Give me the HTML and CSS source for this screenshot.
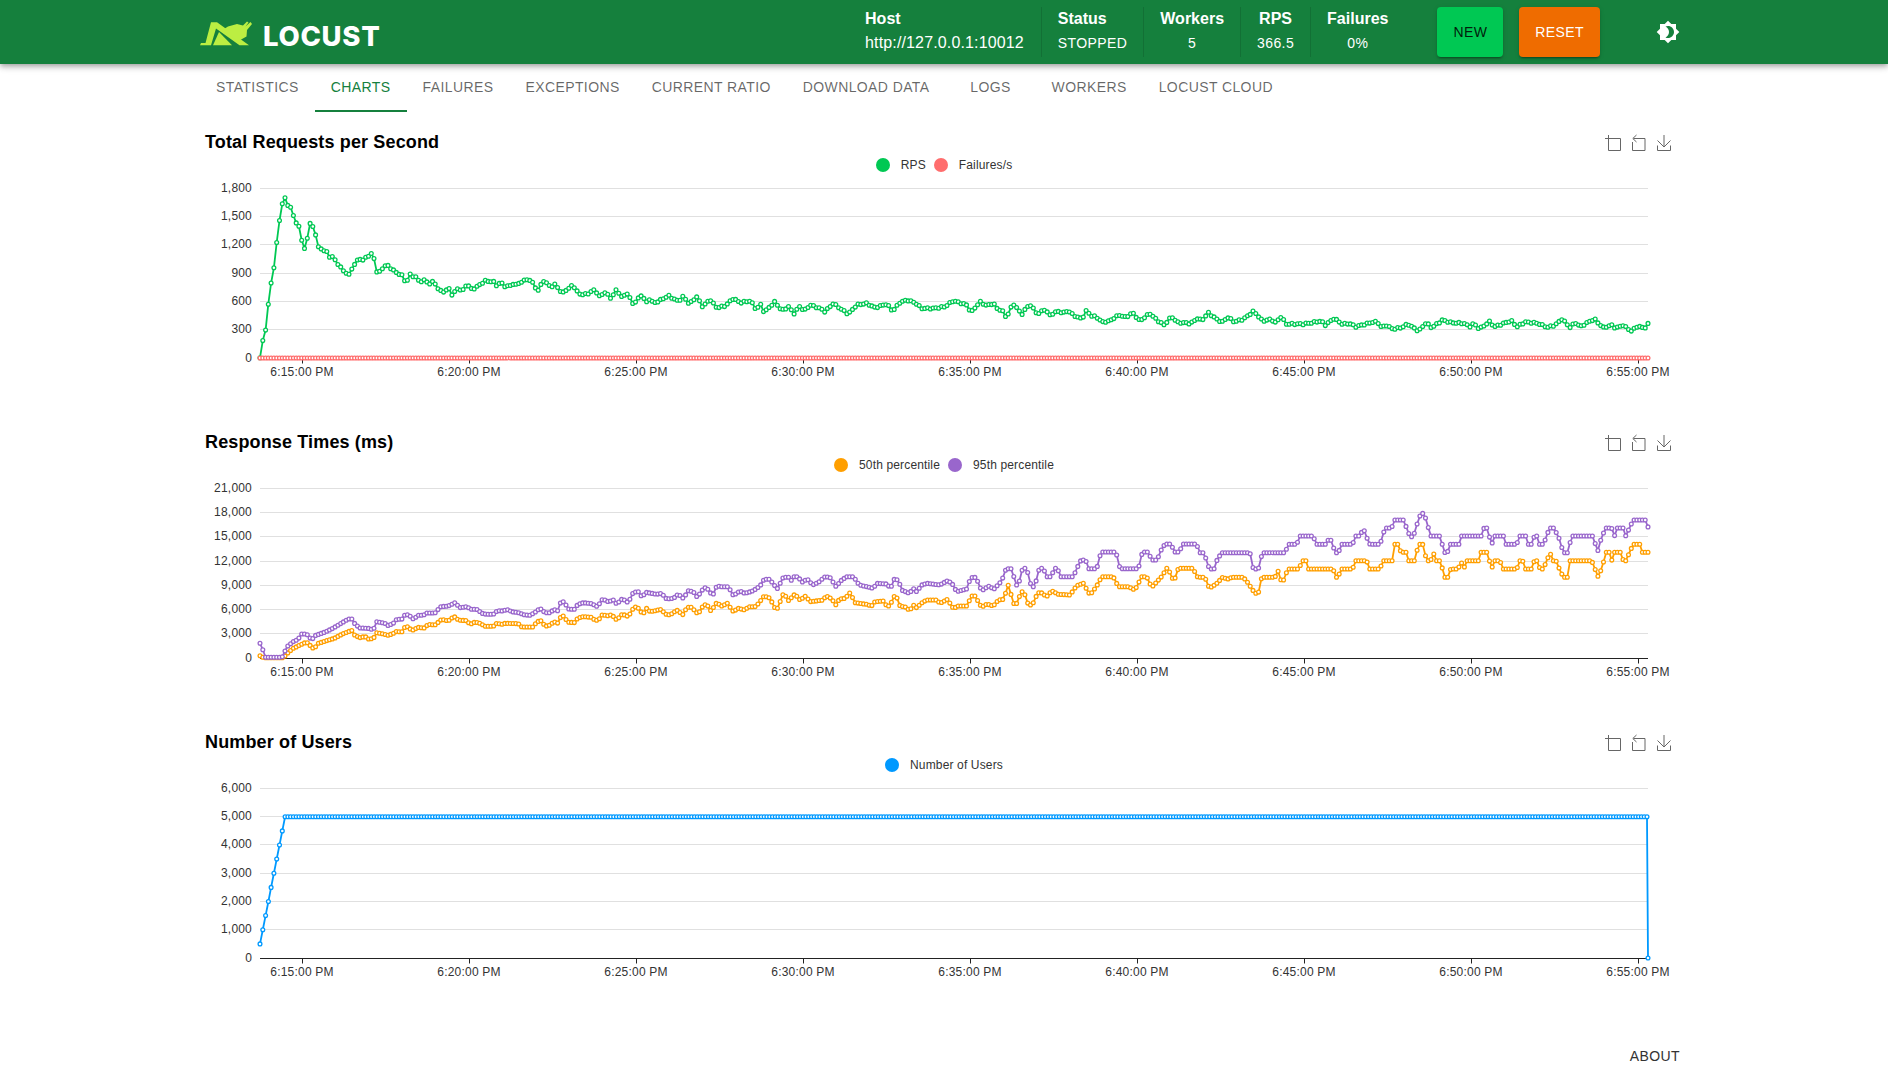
FILE: index.html
```html
<!DOCTYPE html>
<html lang="en">
<head>
<meta charset="utf-8">
<title>Locust</title>
<link rel="stylesheet" href="styles.css">
</head>
<body>
<header class="appbar">
  <div class="appbar-inner">
    <a class="logo" href="#">
      <svg class="logo-mark" viewBox="0 0 70 40" aria-hidden="true">
        <path d="M5 32.300l1-2.300h4.500L16 9.300h6L54 32.300H44.500L21 15.500 16 32.300z"/>
        <path d="M18 32.300L24 19l13 13.300z"/>
        <path d="M26.500 17.500L33 13.500l9-2.500 6 1.500 4-4 1.500 1-3 4 5-4.500L57 11l-5 6-.5 6.500L43.500 28z"/>
      </svg>
      <span class="logo-word">LOCUST</span>
    </a>
    <div class="stats">
      <div class="stat stat-host"><span class="stat-label">Host</span><span class="stat-host-value">http://127.0.0.1:10012</span></div>
      <div class="stat stat-status"><span class="stat-label">Status</span><span class="stat-value">STOPPED</span></div>
      <div class="stat"><span class="stat-label">Workers</span><span class="stat-value">5</span></div>
      <div class="stat"><span class="stat-label">RPS</span><span class="stat-value">366.5</span></div>
      <div class="stat stat-last"><span class="stat-label">Failures</span><span class="stat-value">0%</span></div>
    </div>
    <div class="actions">
      <button class="btn btn-new" type="button">New</button>
      <button class="btn btn-reset" type="button">Reset</button>
    </div>
    <button class="theme-toggle" type="button" aria-label="Toggle theme">
      <svg viewBox="0 0 24 24" aria-hidden="true"><path d="M20 8.69V4h-4.69L12 .69 8.69 4H4v4.69L.69 12 4 15.31V20h4.69L12 23.31 15.31 20H20v-4.69L23.31 12zM12 18c-.89 0-1.74-.2-2.5-.55C11.56 16.5 13 14.42 13 12s-1.44-4.5-3.5-5.45C10.26 6.2 11.11 6 12 6c3.31 0 6 2.69 6 6s-2.69 6-6 6" fill-rule="evenodd"/></svg>
    </button>
  </div>
</header>

<main class="page">
  <nav class="tabs">
    <a class="tab" href="#">Statistics</a>
    <a class="tab tab-active" href="#">Charts</a>
    <a class="tab" href="#">Failures</a>
    <a class="tab" href="#">Exceptions</a>
    <a class="tab" href="#">Current ratio</a>
    <a class="tab" href="#">Download Data</a>
    <a class="tab" href="#">Logs</a>
    <a class="tab" href="#">Workers</a>
    <a class="tab" href="#">Locust Cloud</a>
  </nav>

  <section class="chart">
    <div class="chart-head">
      <h2 class="chart-title">Total Requests per Second</h2>
      <div class="toolbox">
        <svg class="tool tool-zoom" viewBox="0 0 16 16"><path d="M3.500 0v15.500h12V3.500H0"/></svg>
        <svg class="tool" viewBox="0 0 14 16"><path d="M1.500 3.500h11.500v12H.5V7M4.500 0L.8 3.500l3.700 3.500"/></svg>
        <svg class="tool" viewBox="0 0 14 16"><path d="M7 0v12M.5 5.500L7 12l6.500-6.500M.5 10.500v5h13v-5"/></svg>
      </div>
    </div>
    <div class="legend">
      <span class="legend-item"><i class="dot dot-rps"></i>RPS</span>
      <span class="legend-item"><i class="dot dot-fail"></i>Failures/s</span>
    </div>
    <svg class="plot" id="plot-rps" viewBox="0 0 1488 252"></svg>
  </section>

  <section class="chart">
    <div class="chart-head">
      <h2 class="chart-title">Response Times (ms)</h2>
      <div class="toolbox">
        <svg class="tool tool-zoom" viewBox="0 0 16 16"><path d="M3.500 0v15.500h12V3.500H0"/></svg>
        <svg class="tool" viewBox="0 0 14 16"><path d="M1.500 3.500h11.500v12H.5V7M4.500 0L.8 3.500l3.700 3.500"/></svg>
        <svg class="tool" viewBox="0 0 14 16"><path d="M7 0v12M.5 5.500L7 12l6.500-6.500M.5 10.500v5h13v-5"/></svg>
      </div>
    </div>
    <div class="legend">
      <span class="legend-item"><i class="dot dot-p50"></i>50th percentile</span>
      <span class="legend-item"><i class="dot dot-p95"></i>95th percentile</span>
    </div>
    <svg class="plot" id="plot-times" viewBox="0 0 1488 252"></svg>
  </section>

  <section class="chart">
    <div class="chart-head">
      <h2 class="chart-title">Number of Users</h2>
      <div class="toolbox">
        <svg class="tool tool-zoom" viewBox="0 0 16 16"><path d="M3.500 0v15.500h12V3.500H0"/></svg>
        <svg class="tool" viewBox="0 0 14 16"><path d="M1.500 3.500h11.500v12H.5V7M4.500 0L.8 3.500l3.700 3.500"/></svg>
        <svg class="tool" viewBox="0 0 14 16"><path d="M7 0v12M.5 5.500L7 12l6.500-6.500M.5 10.500v5h13v-5"/></svg>
      </div>
    </div>
    <div class="legend">
      <span class="legend-item"><i class="dot dot-users"></i>Number of Users</span>
    </div>
    <svg class="plot" id="plot-users" viewBox="0 0 1488 252"></svg>
  </section>

  <footer class="footer">
    <button class="about" type="button">About</button>
  </footer>
</main>
<script src="charts.js"></script>
</body>
</html>
```

FILE: styles.css
```css
* { box-sizing: border-box; }
html, body { margin: 0; padding: 0; background: #fff; }
body {
  font-family: "Liberation Sans", Arial, sans-serif;
  color: #000;
  overflow: hidden;
}
a { text-decoration: none; color: inherit; }
button { font-family: inherit; border: 0; cursor: pointer; }

.appbar {
  height: 64px;
  background: #15803d;
  color: #fff;
  box-shadow: 0 2px 4px -1px rgba(0,0,0,.2), 0 4px 5px 0 rgba(0,0,0,.14), 0 1px 10px 0 rgba(0,0,0,.12);
  position: relative;
}
.appbar-inner {
  width: 1488px;
  height: 64px;
  margin: 0 auto;
  display: flex;
  align-items: center;
}
.logo { display: flex; align-items: center; color: #fff; margin-left: -5px; }
.logo-mark { width: 70px; height: 40px; fill: #bcee42; margin-top: 1px; }
.logo-word {
  font-family: Inter, "Liberation Sans", sans-serif;
  font-weight: 800;
  font-size: 27.5px;
  line-height: 26px;
  letter-spacing: .7px;
  margin-left: -2px;
  margin-top: 7px;
}

.stats { display: flex; margin-left: auto; height: 50px; }
.stat {
  display: flex;
  flex-direction: column;
  align-items: center;
  padding: 1px 16px 0;
  border-right: 1px solid rgba(0,0,0,.12);
}
.stat-host { align-items: flex-start; padding-right: 17px; }
.stat-status { align-items: flex-start; }
.stat-last { border-right: 0; }
.stat-label { font-size: 16px; font-weight: 700; line-height: 22px; }
.stat-value { font-size: 14px; line-height: 22px; margin-top: 2px; letter-spacing: .4px; }
.stat-host-value { font-size: 16px; line-height: 22px; margin-top: 2px; letter-spacing: .14px; }

.actions { display: flex; gap: 16px; margin-left: 33px; }
.btn {
  height: 50px;
  padding: 0 16px;
  border-radius: 4px;
  font-size: 14px;
  letter-spacing: .4px;
  text-transform: uppercase;
  box-shadow: 0 3px 1px -2px rgba(0,0,0,.2), 0 2px 2px 0 rgba(0,0,0,.14), 0 1px 5px 0 rgba(0,0,0,.12);
}
.btn-new { background: #00c853; color: rgba(0,0,0,.87); }
.btn-reset { background: #ef6c00; color: #fff; }
.theme-toggle {
  width: 40px;
  height: 40px;
  margin-left: 48px;
  padding: 8px;
  background: none;
  display: flex;
}
.theme-toggle svg { width: 24px; height: 24px; fill: #fff; }

.page { width: 1488px; margin: 0 auto; }

.tabs { display: flex; height: 48px; }
.tab {
  min-width: 90px;
  height: 48px;
  padding: 0 16px 2px;
  display: flex;
  align-items: center;
  justify-content: center;
  font-size: 14px;
  letter-spacing: .4px;
  text-transform: uppercase;
  color: rgba(0,0,0,.6);
}
.tab-active { color: #15803d; border-bottom: 2px solid #15803d; padding-bottom: 0; }

.chart { height: 300px; }
.tabs + .chart { margin-top: 14px; }
.chart-head {
  height: 30px;
  display: flex;
  align-items: center;
  justify-content: space-between;
  padding: 1px 17px 0 5px;
}
.chart-title { margin: 0; font-size: 18px; font-weight: 700; line-height: 30px; letter-spacing: .14px; }
.toolbox { display: flex; gap: 11px; margin-top: 3px; }
.tool { width: 14px; height: 16px; fill: none; stroke: #666; stroke-width: 1; overflow: visible; }
.tool-zoom { width: 16px; }

.legend {
  height: 18px;
  display: flex;
  justify-content: center;
  align-items: center;
  gap: 8px;
  font-size: 12px;
  letter-spacing: .15px;
  color: #333;
}
.legend-item { display: flex; align-items: center; gap: 11px; }
.dot { width: 14px; height: 14px; border-radius: 50%; display: block; }
.dot-rps { background: #00c853; }
.dot-fail { background: #ff6d6d; }
.dot-p50 { background: #ff9f00; }
.dot-p95 { background: #9966cc; }
.dot-users { background: #0099ff; }

.plot { display: block; width: 1488px; height: 252px; }
.grid-line { stroke: #e0e0e0; stroke-width: 1; }
.axis-line { stroke: #222; stroke-width: 1; }
.axis-label { font-family: "Liberation Sans", Arial, sans-serif; font-size: 12px; letter-spacing: .2px; fill: #333; }
.label-y { text-anchor: end; }
.label-x { text-anchor: middle; }
.series-line { fill: none; stroke-width: 1.8; stroke-linejoin: round; }
.marker { fill: #fff; stroke-width: 1.3; }
.s-rps { stroke: #00c853; }
.s-fail { stroke: #ff6d6d; }
.s-p50 { stroke: #ff9f00; }
.s-p95 { stroke: #9966cc; }
.s-users { stroke: #0099ff; }

.footer { display: flex; justify-content: flex-end; margin-top: 12px; }
.about {
  height: 36px;
  padding: 0 8px;
  background: none;
  font-size: 14px;
  letter-spacing: .4px;
  text-transform: uppercase;
  color: #333;
}
```

FILE: charts.js
```js
(function () {
  var NS = 'http://www.w3.org/2000/svg';
  var X0 = 260, X1 = 1648, N = 500, DX = (X1 - X0) / (N - 1);
  var TIMES = ['6:15:00 PM', '6:20:00 PM', '6:25:00 PM', '6:30:00 PM', '6:35:00 PM', '6:40:00 PM', '6:45:00 PM', '6:50:00 PM', '6:55:00 PM'];

  function el(name, attrs, parent) {
    var n = document.createElementNS(NS, name);
    for (var k in attrs) n.setAttribute(k, attrs[k]);
    if (parent) parent.appendChild(n);
    return n;
  }

  // Each trace: [x origin, y origin, x scale, [x, y, x, y, ...]] read off the chart.
  function trace(segments) {
    var pts = [];
    segments.forEach(function (s) {
      for (var i = 0; i < s[3].length; i += 2) pts.push([s[0] + s[3][i] / s[2], s[1] + s[3][i + 1] / 3]);
    });
    return pts.sort(function (a, b) { return a[0] - b[0]; });
  }

  function sample(pts, x) {
    if (x <= pts[0][0]) return pts[0][1];
    for (var i = 1; i < pts.length; i++) {
      if (x <= pts[i][0]) {
        var a = pts[i - 1], b = pts[i], t = (x - a[0]) / ((b[0] - a[0]) || 1);
        return a[1] + (b[1] - a[1]) * t;
      }
    }
    return pts[pts.length - 1][1];
  }

  function frame(svg, step, count, labels) {
    for (var k = 0; k < count; k++) {
      var y = Math.floor(14.5 + k * step - 0.1) + 0.5;
      el('line', { x1: 60, x2: 1448, y1: y, y2: y, 'class': 'grid-line' }, svg);
      el('text', { x: 52, y: y + 3.5, 'class': 'axis-label label-y' }, svg).textContent = labels[k];
    }
    el('text', { x: 52, y: 188, 'class': 'axis-label label-y' }, svg).textContent = '0';
    el('line', { x1: 60, x2: 1448, y1: 184.5, y2: 184.5, 'class': 'axis-line' }, svg);
    TIMES.forEach(function (t, i) {
      var x = Math.round(102 + 167 * i) + 0.5;
      el('line', { x1: x, x2: x, y1: 184.5, y2: 189.5, 'class': 'axis-line' }, svg);
      el('text', { x: x - 0.5, y: 202, 'class': 'axis-label label-x' }, svg).textContent = t;
    });
  }

  function draw(svg, points, cls) {
    el('polyline', { points: points.map(function (p) { return p[0].toFixed(1) + ',' + p[1].toFixed(1); }).join(' '), 'class': 'series-line ' + cls }, svg);
    var g = el('g', { 'class': 'marker ' + cls }, svg);
    points.forEach(function (p) { el('circle', { cx: p[0].toFixed(1), cy: p[1].toFixed(1), r: 1.9 }, g); });
  }

  function series(pts, offset, wobble) {
    var out = [];
    for (var i = 0; i < N; i++) {
      var x = X0 + i * DX, j = (wobble && x > 330) ? wobble * Math.sin(i * 2.3) : 0;
      out.push([x - 200, sample(pts, x) + j - offset]);
    }
    return out;
  }

  var rps = trace([
    [200, 120, 3, [180,713,188,663,197,629,205,553,213,491,222,442,230,368,238,304,246,253,255,233,263,256,272,262,280,286,289,310,297,319,305,360,313,387,322,354,330,310,339,320,347,345,355,380,364,387,372,392,380,394,388,412,397,410,405,420,414,432,422,442,430,452,439,458,447,465,455,447,464,432,472,422,480,416,489,421,497,413,505,407,514,402,522,415,530,454,539,456,547,445,555,437,564,438,572,444,580,450,589,458,597,461,605,465,614,482,622,480,630,464,639,469,647,470,655,482,664,483,672,480,680,486,689,490,697,486,705,490,714,505,722,513,730,515,739,510,747,506,755,524,764,516,772,506,780,508,789,511,797,497,805,496,814,507,822,505,830,500,839,495,847,488,855,482,864,484,872,484,880,485,889,496,897,490,905,490,914,498,922,498,930,498,939,491,947,495,955,490,964,486,972,483,980,477,989,481,997,487,1005,500,1014,513,1022,495,1030,482,1039,490,1047,495,1055,500,1064,494,1072,500,1080,508,1083,525,1095,510,1110,505,1117,492,1128,510,1135,520,1150,524,1165,520,1185,508,1197,530]],
    [600, 260, 3, [0,108,15,97,33,115,50,88,66,112,82,100,100,133,124,105,140,127,150,115,160,130,182,120,205,107,235,124,250,109,268,132,290,110,308,140,330,118,350,143,375,138,400,115,420,128,452,122,468,148,483,133,492,157,525,125,545,152,565,140,582,160,600,138,612,153,630,135,660,145,675,155,700,130,720,145,745,162,770,135,800,130,825,143,860,132,878,153,900,127,922,120,945,128,965,145,1000,145,1035,140,1060,122,1100,135,1113,157,1140,125,1160,137,1180,130,1195,150]],
    [1000, 260, 2.305, [3,148,15,173,30,130,50,163,68,132,87,163,102,148,115,165,135,153,145,160,155,152,178,172,190,175,200,150,210,168,222,170,235,186,250,184,275,165,290,172,306,158,322,183,345,160,360,178,378,195,395,170,410,187,440,190,455,175,465,182,480,158,500,178,512,186,525,172,540,185,560,178,585,153,605,183,625,178,635,188,648,170,660,192,700,192,740,183,750,195,770,175,790,193,805,190,820,200,860,186,870,186,880,203,890,195,905,207,925,203,940,192,965,213,982,188,995,203,1020,180,1040,188,1070,190,1082,200,1092,190,1105,207,1128,185,1140,200,1178,182,1192,200,1210,186,1240,190,1262,202,1280,195,1295,177,1315,203,1325,187,1338,200,1355,187,1370,177,1390,203,1410,195,1420,205,1435,195,1455,213,1470,198,1485,205,1497,187]]
  ]);

  var p95 = trace([
    [200, 480, 3, [180,490,188,508,196,532,246,532,254,515,264,497,280,485,295,477,305,462,320,462,335,480,347,466,370,458,395,447,420,432,445,417,458,417,465,433,480,444,505,445,520,450,530,425,555,430,565,437,580,430,590,418,605,418,615,404,625,404,640,417,655,406,670,406,680,399,705,399,722,380,745,378,765,368,780,383,800,380,815,388,830,388,850,402,880,403,892,392,910,393,920,388,935,395,955,398,975,405,990,406,1005,397,1020,385,1035,398,1050,398,1062,388,1075,393,1082,366,1092,365,1105,387,1125,388,1133,373,1150,368,1175,371,1192,380,1208,357,1225,365,1240,360,1250,372,1267,356,1285,368,1300,337,1315,335,1325,350,1340,337,1370,343,1385,340,1400,357,1420,355,1435,342,1450,355,1465,332,1480,335,1492,352]],
    [700, 480, 3, [0,340,12,323,20,323,38,347,50,318,65,320,85,320,100,347,120,333,135,340,160,332,180,318,192,298,210,298,220,313,235,328,245,295,265,290,270,307,280,290,295,290,305,307,322,297,338,315,355,307,375,290,390,292,408,320,425,300,440,290,460,290,478,315,500,320,520,325,530,310,560,312,572,325,582,298,595,300,605,330,628,340,640,325,650,335,665,315,680,310,720,315,740,303,755,308,770,335,800,327,812,293,828,292,845,333,865,318,882,327,905,303,918,266,938,266,945,315,955,315,968,265,980,265,995,325,1005,315,1018,265,1030,265,1040,290,1055,290,1062,265,1072,265,1082,290,1120,290,1130,266,1143,240,1157,240,1165,266,1190,266,1203,216,1248,216,1260,266,1315,266,1327,216,1345,216,1355,240,1372,240,1380,216,1395,192,1415,192,1420,216,1440,216,1445,192,1490,192,1497,216]],
    [1200, 490, 3, [0,188,12,188,28,237,42,237,50,212,65,188,150,188,160,237,175,237,187,188,255,188,265,163,290,163,300,138,340,138,348,163,380,163,388,140,398,163,405,188,415,188,425,163,458,163,465,138,480,138,490,114,498,138,510,163,540,163,555,114,575,114,582,90,610,90,620,114,630,140,640,140,655,90,665,65,680,90,690,138,718,138,735,188,742,188,750,163,778,163,785,138,845,138,852,114,860,114,875,163,885,138,910,138,918,163,950,163,958,138,978,138,985,163,995,163,1003,138,1012,138,1018,163,1030,163,1040,138,1048,114,1060,114,1075,138,1090,188,1103,188,1115,138,1180,138,1192,188,1205,140,1218,114,1235,114,1243,140,1250,114,1270,114,1278,140,1288,114,1300,90,1338,90,1345,114]]
  ]);

  var p50 = trace([
    [200, 480, 3, [180,527,190,533,250,533,265,517,280,505,300,495,315,488,325,488,335,504,345,503,355,490,380,482,405,474,425,463,455,451,465,467,480,473,495,469,505,477,520,476,530,458,545,461,565,466,580,460,590,454,605,456,615,441,625,440,635,452,655,442,672,444,685,433,705,435,725,418,745,423,762,409,775,420,800,422,810,433,825,426,840,430,855,439,880,439,890,430,905,433,915,430,955,431,965,441,1000,441,1010,425,1025,422,1035,439,1050,435,1062,425,1075,430,1083,408,1095,408,1100,426,1125,428,1133,414,1150,410,1175,412,1185,421,1195,420,1208,403,1220,408,1235,404,1250,420,1267,402,1285,410,1300,385,1308,380,1320,388,1327,405,1340,385,1350,395,1385,388,1395,402,1410,405,1430,390,1450,405,1460,382,1475,382,1490,398]],
    [700, 480, 3, [0,395,10,375,20,373,33,393,50,368,65,378,82,370,100,395,115,385,135,390,145,380,165,380,178,368,190,350,205,350,215,365,225,385,238,385,243,343,255,345,265,362,285,342,300,360,317,348,330,365,370,360,378,347,395,357,408,375,418,357,435,355,450,338,465,368,500,373,515,378,525,365,550,363,560,378,572,378,578,348,590,352,600,378,620,382,628,393,640,375,652,385,660,372,680,360,710,360,720,370,742,358,760,385,775,378,800,378,815,348,825,348,845,382,860,372,880,378,895,360,910,358,925,315,935,350,945,382,960,345,970,330,985,375,997,375,1010,345,1020,335,1040,350,1055,332,1075,343,1110,345,1130,317,1150,310,1170,345,1190,318,1205,290,1240,290,1255,320,1285,320,1305,330,1325,290,1340,290,1355,322,1385,290,1400,265,1405,265,1415,295,1425,295,1435,265,1480,265,1490,290,1497,290]],
    [1200, 490, 3, [0,262,15,262,28,295,55,277,65,262,85,267,95,262,130,262,145,280,165,310,175,310,185,262,225,262,232,237,245,277,255,265,262,237,298,237,305,212,318,212,325,237,400,237,405,262,415,262,422,237,458,237,465,212,500,212,507,237,540,237,548,212,578,212,582,163,595,163,603,187,618,187,625,212,645,212,655,163,668,163,680,212,692,212,700,187,707,212,720,212,735,262,745,262,752,237,775,237,782,212,792,237,797,212,835,212,843,187,860,187,868,212,875,237,882,212,900,212,908,237,950,237,960,212,968,212,975,237,995,237,1003,212,1012,212,1020,237,1030,237,1040,212,1050,187,1058,212,1068,212,1078,237,1090,262,1103,262,1110,212,1175,212,1185,237,1192,262,1205,237,1218,187,1228,187,1235,212,1243,187,1262,187,1270,212,1280,212,1288,187,1300,163,1320,163,1327,187,1345,187]]
  ]);

  var plotRps = document.getElementById('plot-rps');
  frame(plotRps, 28.25, 6, ['1,800', '1,500', '1,200', '900', '600', '300']);
  draw(plotRps, series(rps, 174, 0.7), 's-rps');
  var flat = [];
  for (var i = 0; i < N; i++) flat.push([X0 - 200 + i * DX, 184]);
  draw(plotRps, flat, 's-fail');

  var plotTimes = document.getElementById('plot-times');
  frame(plotTimes, 169.5 / 7, 7, ['21,000', '18,000', '15,000', '12,000', '9,000', '6,000', '3,000']);
  draw(plotTimes, series(p50, 474, 0), 's-p50');
  draw(plotTimes, series(p95, 474, 0), 's-p95');

  var plotUsers = document.getElementById('plot-users');
  frame(plotUsers, 28.25, 6, ['6,000', '5,000', '4,000', '3,000', '2,000', '1,000']);
  var users = [];
  for (var u = 0; u < N - 1; u++) {
    var v = Math.min(5000, (u + 1) * 500);
    users.push([X0 - 200 + u * (1447 - 60) / (N - 2), 184 - v / 6000 * 169.5]);
  }
  users.push([1448, 184]);
  draw(plotUsers, users, 's-users');
})();
```
